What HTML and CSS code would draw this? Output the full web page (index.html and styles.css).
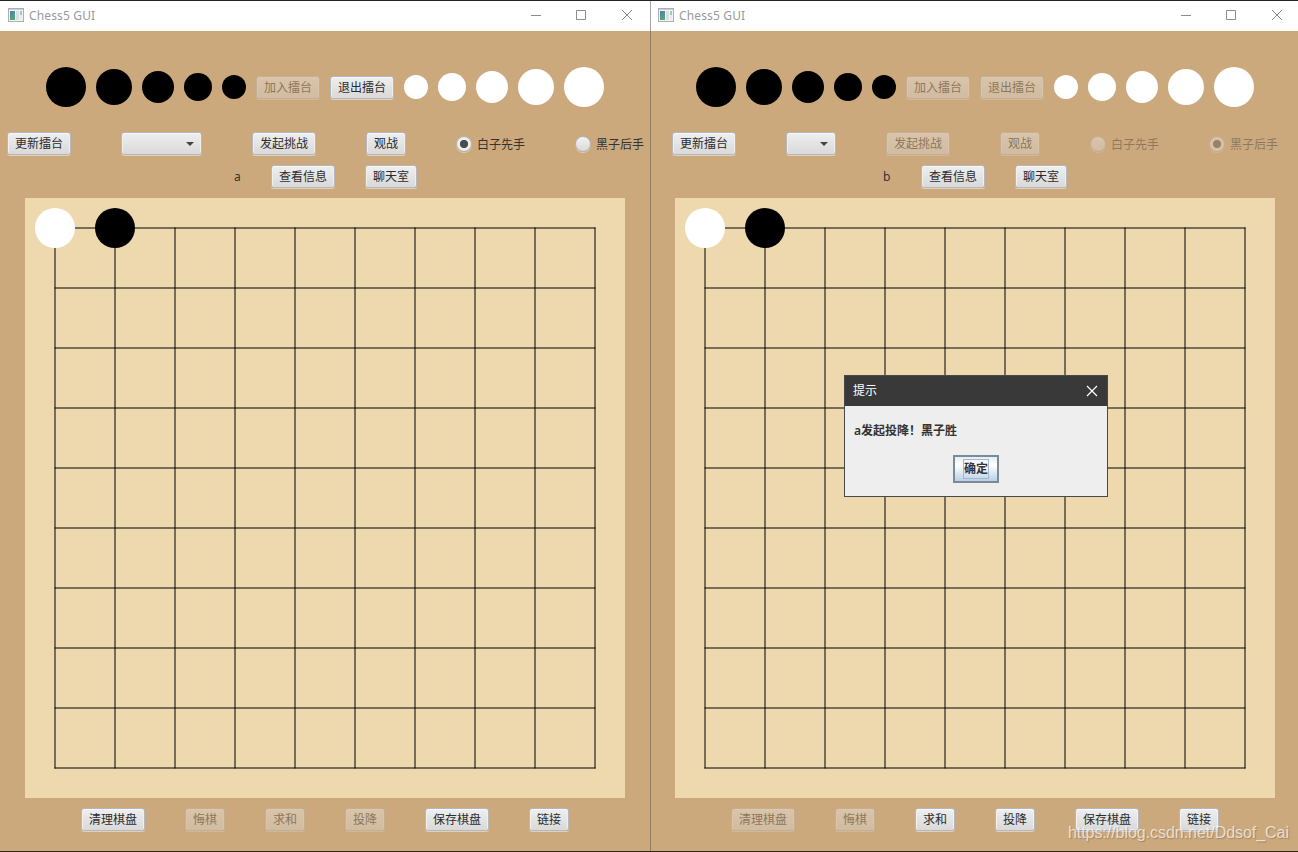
FILE: index.html
```html
<!DOCTYPE html>
<html lang="zh-CN">
<head>
<meta charset="utf-8">
<title>Chess5 GUI</title>
<link rel="stylesheet" href="styles.css">
</head>
<body>
<svg class="defs" width="0" height="0" aria-hidden="true">
  <defs>
    <linearGradient id="appfill" x1="0" y1="0" x2="0.6" y2="1"><stop offset="0" stop-color="#4c7fa8"/><stop offset="1" stop-color="#57a878"/></linearGradient>
    <symbol id="appicon" viewBox="0 0 16 14">
      <rect x="0.5" y="0.5" width="15" height="13" fill="#f1f3f4" stroke="#a9afb4"/>
      <rect x="1" y="1" width="14" height="1" fill="#c6cdd3"/>
      <rect x="2" y="3" width="5" height="9" fill="url(#appfill)"/>
      <rect x="8" y="3" width="3" height="9" fill="#dcdfe1"/>
      <rect x="12" y="3" width="2" height="4" fill="#9cc8c2"/>
      <rect x="12" y="7" width="2" height="5" fill="#e8ecec"/>
    </symbol>
    <symbol id="controls" viewBox="0 0 101 10">
      <path d="M0 5.5H10M45.500 .5H54.500V9.500H45.500ZM91 0L101 10M101 0L91 10" fill="none" stroke="#8c8c8c"/>
    </symbol>
    <symbol id="grid" viewBox="0 0 600 600">
      <g stroke="#000" stroke-width="1" stroke-linecap="square">
        <path d="M30 30H570"/><path d="M30 90H570"/><path d="M30 150H570"/><path d="M30 210H570"/><path d="M30 270H570"/><path d="M30 330H570"/><path d="M30 390H570"/><path d="M30 450H570"/><path d="M30 510H570"/><path d="M30 570H570"/>
        <path d="M30 30V570"/><path d="M90 30V570"/><path d="M150 30V570"/><path d="M210 30V570"/><path d="M270 30V570"/><path d="M330 30V570"/><path d="M390 30V570"/><path d="M450 30V570"/><path d="M510 30V570"/><path d="M570 30V570"/>
      </g>
      <circle cx="30" cy="30" r="20" fill="#fff"/>
      <circle cx="90" cy="30" r="20"/>
    </symbol>
  </defs>
</svg>
<main class="desktop">
  <section class="window">
    <header class="titlebar"><svg class="appicon"><use href="#appicon"/></svg><span class="title">Chess5 GUI</span><svg class="controls"><use href="#controls"/></svg></header>
    <div class="row stones">
      <i class="stone d40"></i><i class="stone d36"></i><i class="stone d32"></i><i class="stone d28"></i><i class="stone d24"></i>
      <button class="btn" disabled>加入擂台</button><button class="btn">退出擂台</button>
      <i class="stone white d24"></i><i class="stone white d28"></i><i class="stone white d32"></i><i class="stone white d36"></i><i class="stone white d40"></i>
    </div>
    <div class="row options">
      <button class="btn">更新擂台</button>
      <div class="btn combo wide"><i class="arrow"></i></div>
      <button class="btn">发起挑战</button>
      <button class="btn">观战</button>
      <label class="radio"><i class="dot on"></i>白子先手</label>
      <label class="radio"><i class="dot"></i>黑子后手</label>
    </div>
    <div class="row user"><span class="name">a</span><button class="btn">查看信息</button><button class="btn">聊天室</button></div>
    <svg class="board"><use href="#grid"/></svg>
    <div class="row actions">
      <button class="btn">清理棋盘</button><button class="btn" disabled>悔棋</button><button class="btn" disabled>求和</button><button class="btn" disabled>投降</button><button class="btn">保存棋盘</button><button class="btn">链接</button>
    </div>
  </section>
  <section class="window second">
    <header class="titlebar"><svg class="appicon"><use href="#appicon"/></svg><span class="title">Chess5 GUI</span><svg class="controls"><use href="#controls"/></svg></header>
    <div class="row stones">
      <i class="stone d40"></i><i class="stone d36"></i><i class="stone d32"></i><i class="stone d28"></i><i class="stone d24"></i>
      <button class="btn" disabled>加入擂台</button><button class="btn" disabled>退出擂台</button>
      <i class="stone white d24"></i><i class="stone white d28"></i><i class="stone white d32"></i><i class="stone white d36"></i><i class="stone white d40"></i>
    </div>
    <div class="row options indent">
      <button class="btn">更新擂台</button>
      <div class="btn combo"><i class="arrow"></i></div>
      <button class="btn" disabled>发起挑战</button>
      <button class="btn" disabled>观战</button>
      <label class="radio off"><i class="dot"></i>白子先手</label>
      <label class="radio off"><i class="dot on"></i>黑子后手</label>
    </div>
    <div class="row user"><span class="name b">b</span><button class="btn">查看信息</button><button class="btn">聊天室</button></div>
    <svg class="board"><use href="#grid"/></svg>
    <div class="row actions">
      <button class="btn" disabled>清理棋盘</button><button class="btn" disabled>悔棋</button><button class="btn">求和</button><button class="btn">投降</button><button class="btn">保存棋盘</button><button class="btn">链接</button>
    </div>
  </section>
  <div class="dialog" role="dialog">
    <header class="dialog-head"><span>提示</span><svg width="10" height="10" viewBox="0 0 10 10"><path d="M0 0L10 10M10 0L0 10" stroke="#fff" stroke-width="1.2"/></svg></header>
    <p class="message">a发起投降！黑子胜</p>
    <button class="ok"><span>确定</span></button>
  </div>
  <div class="watermark">https://blog.csdn.net/Ddsof_Cai</div>
</main>
</body>
</html>
```
FILE: styles.css
```css
* { box-sizing: border-box; }
body { margin: 0; overflow: hidden; font: 12px/16px "Noto Sans", "Noto Sans CJK SC", sans-serif; color: #333; }
.defs { position: absolute; }
.desktop { position: relative; width: 1298px; height: 852px; display: grid; grid-template-columns: 650px 648px; overflow: hidden; border-top: 1px solid #262427; border-bottom: 1px solid #2b2927; background: #cca97c; }
.window { display: flex; flex-direction: column; overflow: hidden; }
.second { box-shadow: inset 1px 0 #917b62; }
.window > * { width: 650px; flex: none; }
.titlebar { height: 30px; display: flex; align-items: center; padding: 0 18px 2px 8px; background: #fff; color: #999; }
.second .titlebar { box-shadow: inset 1px 0 #a6a6a6; }
.appicon { width: 16px; height: 14px; }
.title { margin-left: 5px; letter-spacing: .15px; padding-top: 1px; }
.controls { width: 101px; height: 10px; margin-left: auto; overflow: visible; }
.row { display: flex; align-items: center; }
.stones { height: 40px; margin-top: 36px; padding-left: 46px; gap: 10px; }
.stone { border-radius: 50%; background: #000; flex: none; }
.white { background: #fff; }
.d40 { width: 40px; height: 40px; }
.d36 { width: 36px; height: 36px; }
.d32 { width: 32px; height: 32px; }
.d28 { width: 28px; height: 28px; }
.d24 { width: 24px; height: 24px; }
.btn { height: 23px; flex: none; padding: 0 7px 0 6px; border: 1px solid #b3b8be; border-radius: 3px; background: linear-gradient(#efefef, #d9d9d9); box-shadow: inset 0 1px #f8f8f8, inset 1px 0 #f0f0f0, inset -1px 0 #f0f0f0, 0 1px rgba(255,255,255,.45); font: inherit; line-height: 20px; color: #2b2b2b; white-space: nowrap; }
button.btn { padding: 0 7px; }
.btn:disabled { opacity: .4; }
.stones .btn { margin-top: 1px; }
.options { height: 23px; margin-top: 25px; padding-left: 7px; gap: 50px; }
.indent { padding-left: 22px; }
.combo { width: 50px; display: flex; align-items: center; justify-content: flex-end; }
.wide { width: 81px; }
.arrow { border: 4px solid transparent; border-top-color: #444; border-bottom: 0; margin-top: 1px; }
.radio { display: flex; align-items: center; gap: 5px; width: 69px; white-space: nowrap; padding-top: 2px; }
.off { opacity: .4; }
.dot { width: 16px; height: 16px; border: 1px solid #b0b5bb; border-radius: 50%; background: linear-gradient(#f2f2f2, #dadada); box-shadow: 0 1px rgba(255,255,255,.4); flex: none; margin-top: -1px; }
.on { background: radial-gradient(circle, #4b4b4b 0 3.700px, #ececec 4.500px); }
.user { height: 23px; margin-top: 10px; padding-left: 234px; gap: 30px; }
.name { width: 7px; }
.b { margin-left: -1px; width: 8px; }
.window > .board { display: block; width: 600px; height: 600px; margin: 10px 25px 0; background: #eed9af; }
.actions { height: 23px; margin-top: 10px; padding-left: 81px; gap: 40px; }
.dialog { position: absolute; left: 844px; top: 374px; width: 264px; height: 122px; border: 1px solid #464a4d; background: #eee; display: flex; flex-direction: column; }
.dialog-head { height: 30px; display: flex; align-items: center; justify-content: space-between; padding: 0 10px 0 8px; background: #393939; color: #fff; }
.dialog-head svg { margin-top: -1px; overflow: visible; }
.message { margin: 17px 0 0 9px; font-weight: 600; line-height: 16px; }
.ok { width: 46px; height: 28px; margin: 16px auto 0 108px; padding: 0; display: grid; place-items: center; border: 2px solid #7a8a99; background: linear-gradient(#e4edf5, #fff 35%, #b8cfe5); font: inherit; font-weight: 600; color: #333; }
.ok span { width: 26px; height: 20px; line-height: 17px; border: 1px solid #a3b8cc; }
.watermark { position: absolute; right: 9px; top: 822px; font: 16px/20px "Liberation Sans", sans-serif; letter-spacing: -.04px; color: rgba(255,255,255,.68); text-shadow: 1px 1px 1px rgba(90,70,50,.35); white-space: nowrap; }
```
